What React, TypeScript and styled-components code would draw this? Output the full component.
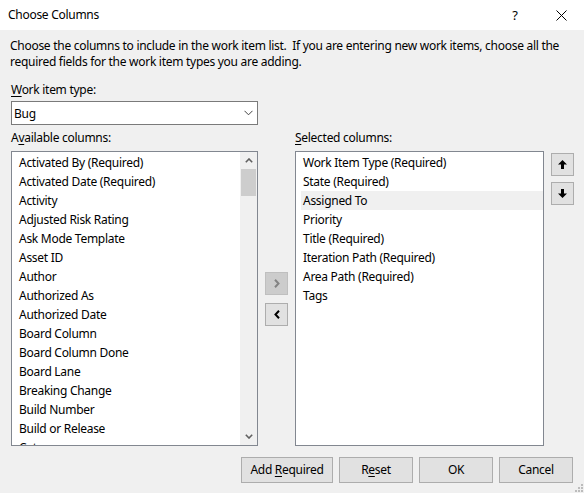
import React from 'react';
import styled, { createGlobalStyle } from 'styled-components';

const Global = createGlobalStyle`
  html, body { margin: 0; padding: 0; background: #f0f0f0; }
  body {
    font-family: "Segoe UI", "Noto Sans", "Open Sans", sans-serif;
    font-size: 12px;
    letter-spacing: -0.28px;
    color: #000;
  }
  * { box-sizing: border-box; }
`;

const Dialog = styled.div`
  width: 584px;
  height: 493px;
  display: flex;
  flex-direction: column;
  background: #f0f0f0;
  position: relative;
  overflow: hidden;
`;

const TitleBar = styled.div`
  height: 30px;
  flex: none;
  background: #fff;
  display: flex;
  align-items: center;
  padding-left: 8px;
`;

const Title = styled.div`
  flex: 1;
  line-height: 16px;
`;

const TitleButton = styled.div`
  width: 46px;
  height: 30px;
  display: flex;
  align-items: center;
  justify-content: center;
  font-size: 13px;
`;

const Body = styled.div`
  flex: 1;
  display: flex;
  flex-direction: column;
  padding: 8px 10px 10px 11px;
`;

const Description = styled.p`
  margin: 0 0 0 -1px;
  line-height: 16px;
`;

const Label = styled.div<{ $mt?: number }>`
  line-height: 16px;
  margin-top: ${(p) => p.$mt ?? 0}px;
`;

const Combo = styled.div`
  margin-top: 3px;
  width: 247px;
  height: 24px;
  border: 1px solid #7a7a7a;
  background: #fff;
  display: flex;
  align-items: center;
  justify-content: space-between;
  padding: 0 4px 0 2px;
`;

const Columns = styled.div`
  margin-top: 5px;
  display: grid;
  grid-template-columns: 247px 23px 249px 23px;
  grid-template-rows: 16px 295px;
  column-gap: 7px;
  row-gap: 5px;
`;

const ListBox = styled.div`
  border: 1px solid #828790;
  background: #fff;
  display: flex;
  overflow: hidden;
  padding: 1px 0 1px 0;
`;

const Rows = styled.div`
  flex: 1;
  display: flex;
  flex-direction: column;
  min-width: 0;
`;

const Row = styled.div<{ $selected?: boolean }>`
  flex: none;
  height: 19px;
  line-height: 19px;
  margin-left: 5px;
  padding-left: 2px;
  white-space: nowrap;
  background: ${(p) => (p.$selected ? '#f0f0f0' : 'transparent')};
`;

const ScrollBar = styled.div`
  width: 17px;
  flex: none;
  margin: -1px 0;
  background: #f0f0f0;
  display: flex;
  flex-direction: column;
  align-items: center;
`;

const ScrollArrow = styled.div`
  height: 17px;
  width: 17px;
  flex: none;
  display: flex;
  align-items: center;
  justify-content: center;
`;

const Thumb = styled.div`
  width: 15px;
  height: 27px;
  flex: none;
  background: #cdcdcd;
`;

const Spacer = styled.div`
  flex: 1;
`;

const MoveColumn = styled.div`
  display: flex;
  flex-direction: column;
  justify-content: center;
  gap: 8px;
`;

const OrderColumn = styled.div`
  display: flex;
  flex-direction: column;
  gap: 6px;
  padding-top: 2px;
`;

const SquareButton = styled.div<{ $disabled?: boolean }>`
  width: 23px;
  height: 23px;
  border: 1px solid ${(p) => (p.$disabled ? '#bfbfbf' : '#adadad')};
  background: ${(p) => (p.$disabled ? '#cccccc' : '#e1e1e1')};
  display: flex;
  align-items: center;
  justify-content: center;
`;

const Footer = styled.div`
  margin-top: 11px;
  display: flex;
  justify-content: flex-end;
  gap: 6px;
  padding-right: 1px;
`;

const Button = styled.div<{ $w: number }>`
  width: ${(p) => p.$w}px;
  height: 26px;
  border: 1px solid #adadad;
  background: #e1e1e1;
  display: flex;
  align-items: center;
  justify-content: center;
  line-height: 16px;
`;

const U = styled.span`
  text-decoration: underline;
  text-underline-offset: 2px;
`;

const Grip = styled.svg`
  position: absolute;
  right: 1px;
  bottom: 1px;
`;

const available = [
  'Activated By (Required)',
  'Activated Date (Required)',
  'Activity',
  'Adjusted Risk Rating',
  'Ask Mode Template',
  'Asset ID',
  'Author',
  'Authorized As',
  'Authorized Date',
  'Board Column',
  'Board Column Done',
  'Board Lane',
  'Breaking Change',
  'Build Number',
  'Build or Release',
  'Category',
];

const selected = [
  'Work Item Type (Required)',
  'State (Required)',
  'Assigned To',
  'Priority',
  'Title (Required)',
  'Iteration Path (Required)',
  'Area Path (Required)',
  'Tags',
];

export default function App() {
  return (
    <>
      <Global />
      <Dialog>
        <TitleBar>
          <Title>Choose Columns</Title>
          <TitleButton>?</TitleButton>
          <TitleButton>
            <svg width="11" height="11" viewBox="0 0 11 11">
              <path d="M0.5 0.5 L10.5 10.5 M10.5 0.5 L0.5 10.5" stroke="#000" strokeWidth="1" fill="none" />
            </svg>
          </TitleButton>
        </TitleBar>
        <Body>
          <Description>
            Choose the columns to include in the work item list.&nbsp; If you are entering new work items, choose all the
            required fields for the work item types you are adding.
          </Description>
          <Label $mt={12}>
            <U>W</U>ork item type:
          </Label>
          <Combo>
            <span>Bug</span>
            <svg width="9" height="6" viewBox="0 0 9 6">
              <polyline points="0.5,0.8 4.5,4.8 8.5,0.8" stroke="#444" strokeWidth="1" fill="none" />
            </svg>
          </Combo>
          <Columns>
            <Label>
              A<U>v</U>ailable columns:
            </Label>
            <div />
            <Label>
              <U>S</U>elected columns:
            </Label>
            <div />
            <ListBox>
              <Rows>
                {available.map((t) => (
                  <Row key={t}>{t}</Row>
                ))}
              </Rows>
              <ScrollBar>
                <ScrollArrow>
                  <svg width="8" height="5" viewBox="0 0 8 5">
                    <polyline points="0.8,4.2 4,1 7.2,4.2" stroke="#606060" strokeWidth="1.6" fill="none" />
                  </svg>
                </ScrollArrow>
                <Thumb />
                <Spacer />
                <ScrollArrow>
                  <svg width="8" height="5" viewBox="0 0 8 5">
                    <polyline points="0.8,0.8 4,4 7.2,0.8" stroke="#606060" strokeWidth="1.6" fill="none" />
                  </svg>
                </ScrollArrow>
              </ScrollBar>
            </ListBox>
            <MoveColumn>
              <SquareButton $disabled>
                <svg width="6" height="9" viewBox="0 0 6 9">
                  <polyline points="1,0.8 4.5,4.5 1,8.2" stroke="#838383" strokeWidth="2" fill="none" />
                </svg>
              </SquareButton>
              <SquareButton>
                <svg width="6" height="9" viewBox="0 0 6 9">
                  <polyline points="5,0.8 1.5,4.5 5,8.2" stroke="#000" strokeWidth="2" fill="none" />
                </svg>
              </SquareButton>
            </MoveColumn>
            <ListBox>
              <Rows>
                {selected.map((t) => (
                  <Row key={t} $selected={t === 'Assigned To'}>
                    {t}
                  </Row>
                ))}
              </Rows>
            </ListBox>
            <OrderColumn>
              <SquareButton>
                <svg width="9" height="9" viewBox="0 0 9 9">
                  <path d="M4.5 0 L9 4.5 L6 4.5 L6 9 L3 9 L3 4.5 L0 4.5 Z" fill="#000" />
                </svg>
              </SquareButton>
              <SquareButton>
                <svg width="9" height="9" viewBox="0 0 9 9">
                  <path d="M4.5 9 L9 4.5 L6 4.5 L6 0 L3 0 L3 4.5 L0 4.5 Z" fill="#000" />
                </svg>
              </SquareButton>
            </OrderColumn>
          </Columns>
          <Footer>
            <Button $w={92}>
              Add&nbsp;<U>R</U>equired
            </Button>
            <Button $w={74}>
              R<U>e</U>set
            </Button>
            <Button $w={74}>OK</Button>
            <Button $w={74}>Cancel</Button>
          </Footer>
        </Body>
        <Grip width="8" height="8" viewBox="0 0 8 8">
          <rect x="6" y="0" width="2" height="2" fill="#bcbcbc" />
          <rect x="3" y="3" width="2" height="2" fill="#bcbcbc" />
          <rect x="6" y="3" width="2" height="2" fill="#bcbcbc" />
          <rect x="0" y="6" width="2" height="2" fill="#bcbcbc" />
          <rect x="3" y="6" width="2" height="2" fill="#bcbcbc" />
          <rect x="6" y="6" width="2" height="2" fill="#bcbcbc" />
        </Grip>
      </Dialog>
    </>
  );
}
